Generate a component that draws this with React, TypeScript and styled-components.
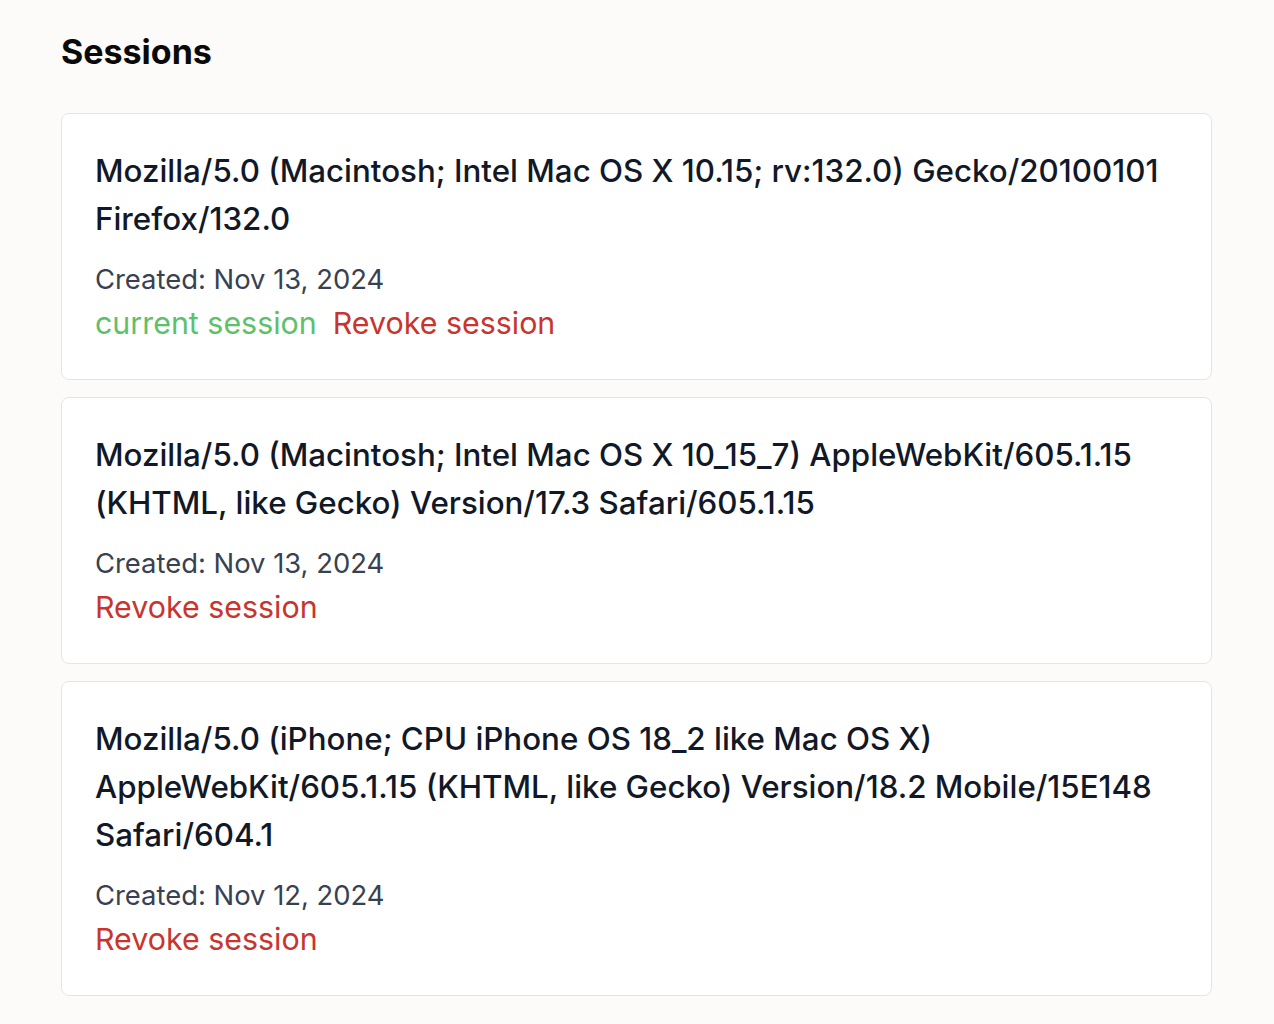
import React from "react";
import styled, { createGlobalStyle } from "styled-components";

const Global = createGlobalStyle`
  html, body { margin: 0; padding: 0; background: #fcfbf9; }
  body { font-family: Inter, "Noto Sans", "Liberation Sans", sans-serif; -webkit-font-smoothing: antialiased; }
`;

const Page = styled.main`
  padding: 25px 62px 40px 61px;
  display: flex;
  flex-direction: column;
`;

const Title = styled.h1`
  margin: 0 0 34px 0;
  font-size: 34px;
  line-height: 54px;
  font-weight: 700;
  color: #0a0a0a;
`;

const List = styled.div`
  display: flex;
  flex-direction: column;
  gap: 17px;
`;

const Card = styled.section`
  background: #ffffff;
  border: 1px solid #e4e5e9;
  border-radius: 8px;
  padding: 33px 33px 34px;
`;

const Agent = styled.div`
  font-size: 31.3px;
  line-height: 48px;
  font-weight: 500;
  color: #111827;
  margin-bottom: 14px;
`;

const Meta = styled.div`
  font-size: 27.4px;
  line-height: 44px;
  color: #374151;
`;

const Actions = styled.div`
  display: flex;
  gap: 16px;
  font-size: 30.4px;
  line-height: 44px;
`;

const Tag = styled.span<{ $tone: "green" | "red" }>`
  color: ${(p) => (p.$tone === "green" ? "#5cc16a" : "#c8352c")};
  cursor: ${(p) => (p.$tone === "red" ? "pointer" : "default")};
`;

const sessions = [
  {
    ua: "Mozilla/5.0 (Macintosh; Intel Mac OS X 10.15; rv:132.0) Gecko/20100101 Firefox/132.0",
    created: "Nov 13, 2024",
    current: true,
  },
  {
    ua: "Mozilla/5.0 (Macintosh; Intel Mac OS X 10_15_7) AppleWebKit/605.1.15 (KHTML, like Gecko) Version/17.3 Safari/605.1.15",
    created: "Nov 13, 2024",
    current: false,
  },
  {
    ua: "Mozilla/5.0 (iPhone; CPU iPhone OS 18_2 like Mac OS X) AppleWebKit/605.1.15 (KHTML, like Gecko) Version/18.2 Mobile/15E148 Safari/604.1",
    created: "Nov 12, 2024",
    current: false,
  },
];

export default function App() {
  return (
    <>
      <Global />
      <Page>
        <Title>Sessions</Title>
        <List>
          {sessions.map((s, i) => (
            <Card key={i}>
              <Agent>{s.ua}</Agent>
              <Meta>Created: {s.created}</Meta>
              <Actions>
                {s.current && <Tag $tone="green">current session</Tag>}
                <Tag $tone="red">Revoke session</Tag>
              </Actions>
            </Card>
          ))}
        </List>
      </Page>
    </>
  );
}
